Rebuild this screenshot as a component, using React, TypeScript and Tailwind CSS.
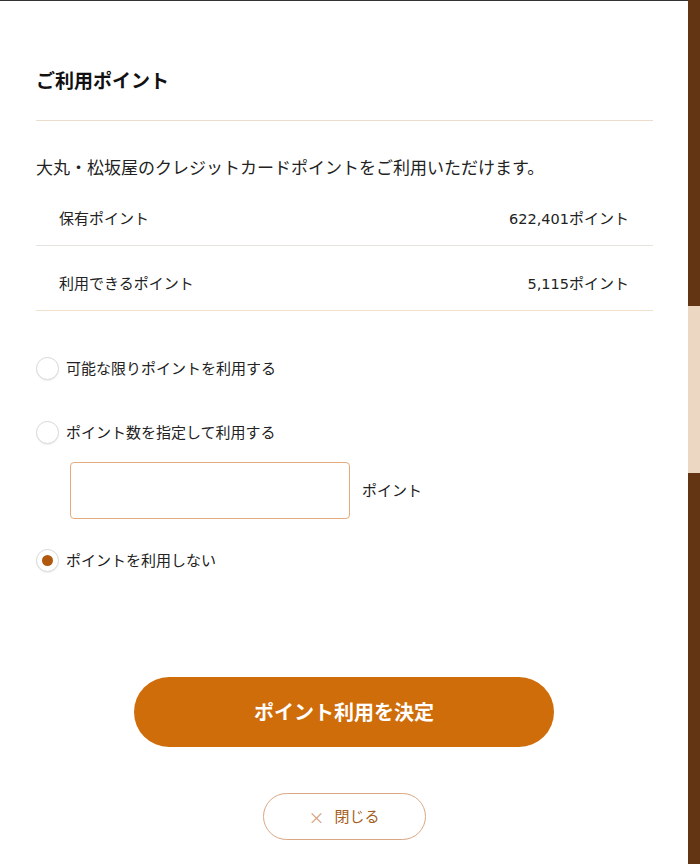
import { useState } from "react";

const font = { fontFamily: '"Noto Sans CJK JP", "Noto Sans", sans-serif' };

type Choice = "max" | "custom" | "none";

function Radio({ checked, label, onClick }: { checked: boolean; label: string; onClick: () => void }) {
  return (
    <button type="button" onClick={onClick} className="flex items-center gap-[7px] text-left">
      <span className="w-[23px] h-[23px] rounded-full border border-[#d9d9d9] bg-white flex items-center justify-center shadow-[0_1px_1px_rgba(0,0,0,0.06)]">
        {checked && <span className="w-[11px] h-[11px] rounded-full bg-[#b0580d]" />}
      </span>
      <span className="text-[15px] leading-[24px] text-[#222]">{label}</span>
    </button>
  );
}

export default function App() {
  const [choice, setChoice] = useState<Choice>("none");
  const [points, setPoints] = useState("");

  const rows = [
    { label: "保有ポイント", value: "622,401", line: "border-[#e6e2de]" },
    { label: "利用できるポイント", value: "5,115", line: "border-[#f0e0cd]" },
  ];

  return (
    <div className="h-[864px] w-[700px] flex bg-white overflow-hidden" style={font}>
      <div className="flex-1 border-t border-[#333] flex flex-col">
        <div className="pl-[36px] pr-[35px]">
          <h2 className="pt-[65px] pb-[26px] border-b border-[#ecdccb] text-[19px] leading-[28px] font-bold text-[#111]">
            ご利用ポイント
          </h2>
          <p className="mt-[32px] text-[17px] leading-[28px] text-[#222]">
            大丸・松坂屋のクレジットカードポイントをご利用いただけます。
          </p>
          {rows.map((r) => (
            <div
              key={r.label}
              className={`h-[65px] flex items-start justify-between pl-[23px] pr-[24px] pt-[25px] border-b ${r.line} text-[15px] leading-[24px] text-[#222]`}
            >
              <span>{r.label}</span>
              <span className="flex items-baseline h-[24px]">
                <span className="font-['DejaVu_Sans',sans-serif] text-[14.5px] leading-[24px]">{r.value}</span>
                <span>ポイント</span>
              </span>
            </div>
          ))}

          <div className="mt-[45px] flex flex-col">
            <Radio checked={choice === "max"} label="可能な限りポイントを利用する" onClick={() => setChoice("max")} />
            <div className="mt-[40px]">
              <Radio checked={choice === "custom"} label="ポイント数を指定して利用する" onClick={() => setChoice("custom")} />
            </div>
            <div className="mt-[18px] ml-[34px] flex items-center gap-[12px]">
              <input
                value={points}
                onChange={(e) => setPoints(e.target.value)}
                className="w-[280px] h-[57px] rounded-[4px] border border-[#e3ab7e] px-3 text-[15px] outline-none"
              />
              <span className="text-[15px] text-[#222]">ポイント</span>
            </div>
            <div className="mt-[29px]">
              <Radio checked={choice === "none"} label="ポイントを利用しない" onClick={() => setChoice("none")} />
            </div>
          </div>
        </div>

        <div className="mt-[105px] flex flex-col items-center">
          <button className="w-[420px] h-[70px] rounded-full bg-[#cf6d0a] text-white text-[20px] font-bold">
            ポイント利用を決定
          </button>
          <button className="mt-[46px] w-[163px] h-[47px] rounded-full border border-[#d9a784] flex items-center justify-center gap-[10px] text-[15px] text-[#a4601f]">
            <span className="text-[#d6a07c] text-[16px]">×</span>
            <span>閉じる</span>
          </button>
        </div>
      </div>

      <div className="w-[12px] h-full bg-[#633512] flex flex-col">
        <div className="h-[306px]" />
        <div className="h-[167px] bg-[#ecd7c2]" />
      </div>
    </div>
  );
}
